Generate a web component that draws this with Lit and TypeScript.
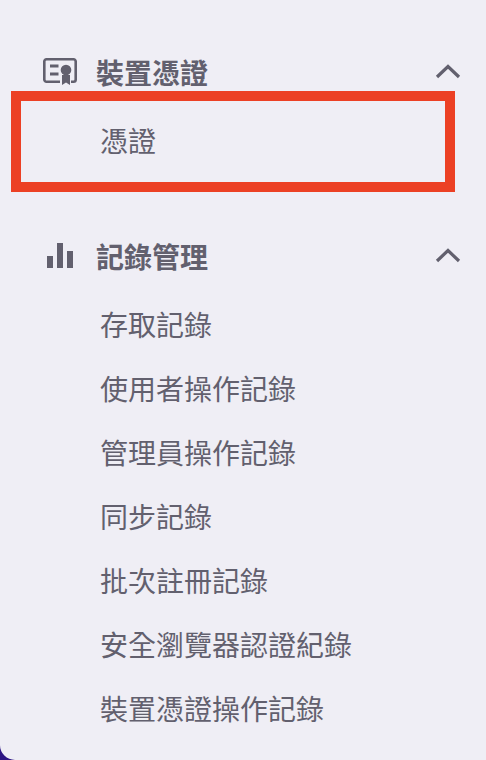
import { LitElement, html, css, svg } from "lit";
import { customElement } from "lit/decorators.js";

const certIcon = svg`<svg class="ico" viewBox="0 0 34 28" width="34" height="28" fill="none">
  <path d="M17 23.700H3.500a2.200 2.200 0 0 1-2.200-2.200V3.500A2.200 2.200 0 0 1 3.500 1.300H30.500A2.200 2.200 0 0 1 32.700 3.500V21.500A2.200 2.200 0 0 1 30.500 23.700H28" stroke="currentColor" stroke-width="2.600"/>
  <path d="M7 8h8.500M7 16h8.500" stroke="currentColor" stroke-width="3"/>
  <circle cx="23" cy="12" r="5.300" fill="currentColor"/>
  <path d="M19 17h8v10l-4-2.500-4 2.500z" fill="currentColor"/>
</svg>`;

const barsIcon = svg`<svg class="ico" viewBox="0 0 34 28" width="34" height="28" fill="currentColor">
  <rect x="4" y="14" width="6" height="12"/><rect x="14" y="1" width="6" height="25"/><rect x="24" y="9" width="6" height="17"/>
</svg>`;

const chevron = svg`<svg class="chev" viewBox="0 0 26 16" width="26" height="16" fill="none"><path d="M2 14L13 3.500L24 14" stroke="currentColor" stroke-width="3.200"/></svg>`;

const groups = [
  { title: "裝置憑證", icon: certIcon, items: ["憑證"] },
  { title: "記錄管理", icon: barsIcon, items: ["存取記錄", "使用者操作記錄", "管理員操作記錄", "同步記錄", "批次註冊記錄", "安全瀏覽器認證紀錄", "裝置憑證操作記錄"] },
];

@customElement("app-root")
export class AppRoot extends LitElement {
  static styles = css`
    :host { display: block; width: 486px; height: 760px; background: #2d1583; overflow: hidden; position: relative;
      font-family: "Noto Sans CJK TC", "Noto Sans", sans-serif; color: #62606e; }
    .panel { height: 760px; box-sizing: border-box; padding-top: 40px; background: #efeef5; border-bottom-left-radius: 15px;
      display: flex; flex-direction: column; gap: 52px; }
    .group { display: flex; flex-direction: column; }
    .head { height: 64px; display: flex; align-items: center; padding: 0 25px 0 43px; }
    .ico { flex: none; }
    .title { margin-left: 19px; font-size: 28px; font-weight: 700; line-height: 64px; flex: 1; }
    .chev { flex: none; margin-bottom: 2px; }
    .item { height: 64px; line-height: 64px; font-size: 28px; padding-left: 100px; white-space: nowrap; }
    .items { display: flex; flex-direction: column; margin-top: 4px; }
    .mark { position: absolute; left: 11px; top: 91px; width: 444px; height: 101px; box-sizing: border-box; border: 10px solid #ec4024; }
  `;
  render() {
    return html`<div class="panel">
      ${groups.map(g => html`<section class="group">
        <div class="head">${g.icon}<span class="title">${g.title}</span>${chevron}</div>
        <div class="items">${g.items.map(i => html`<div class="item">${i}</div>`)}</div>
      </section>`)}
    </div><div class="mark"></div>`;
  }
}
